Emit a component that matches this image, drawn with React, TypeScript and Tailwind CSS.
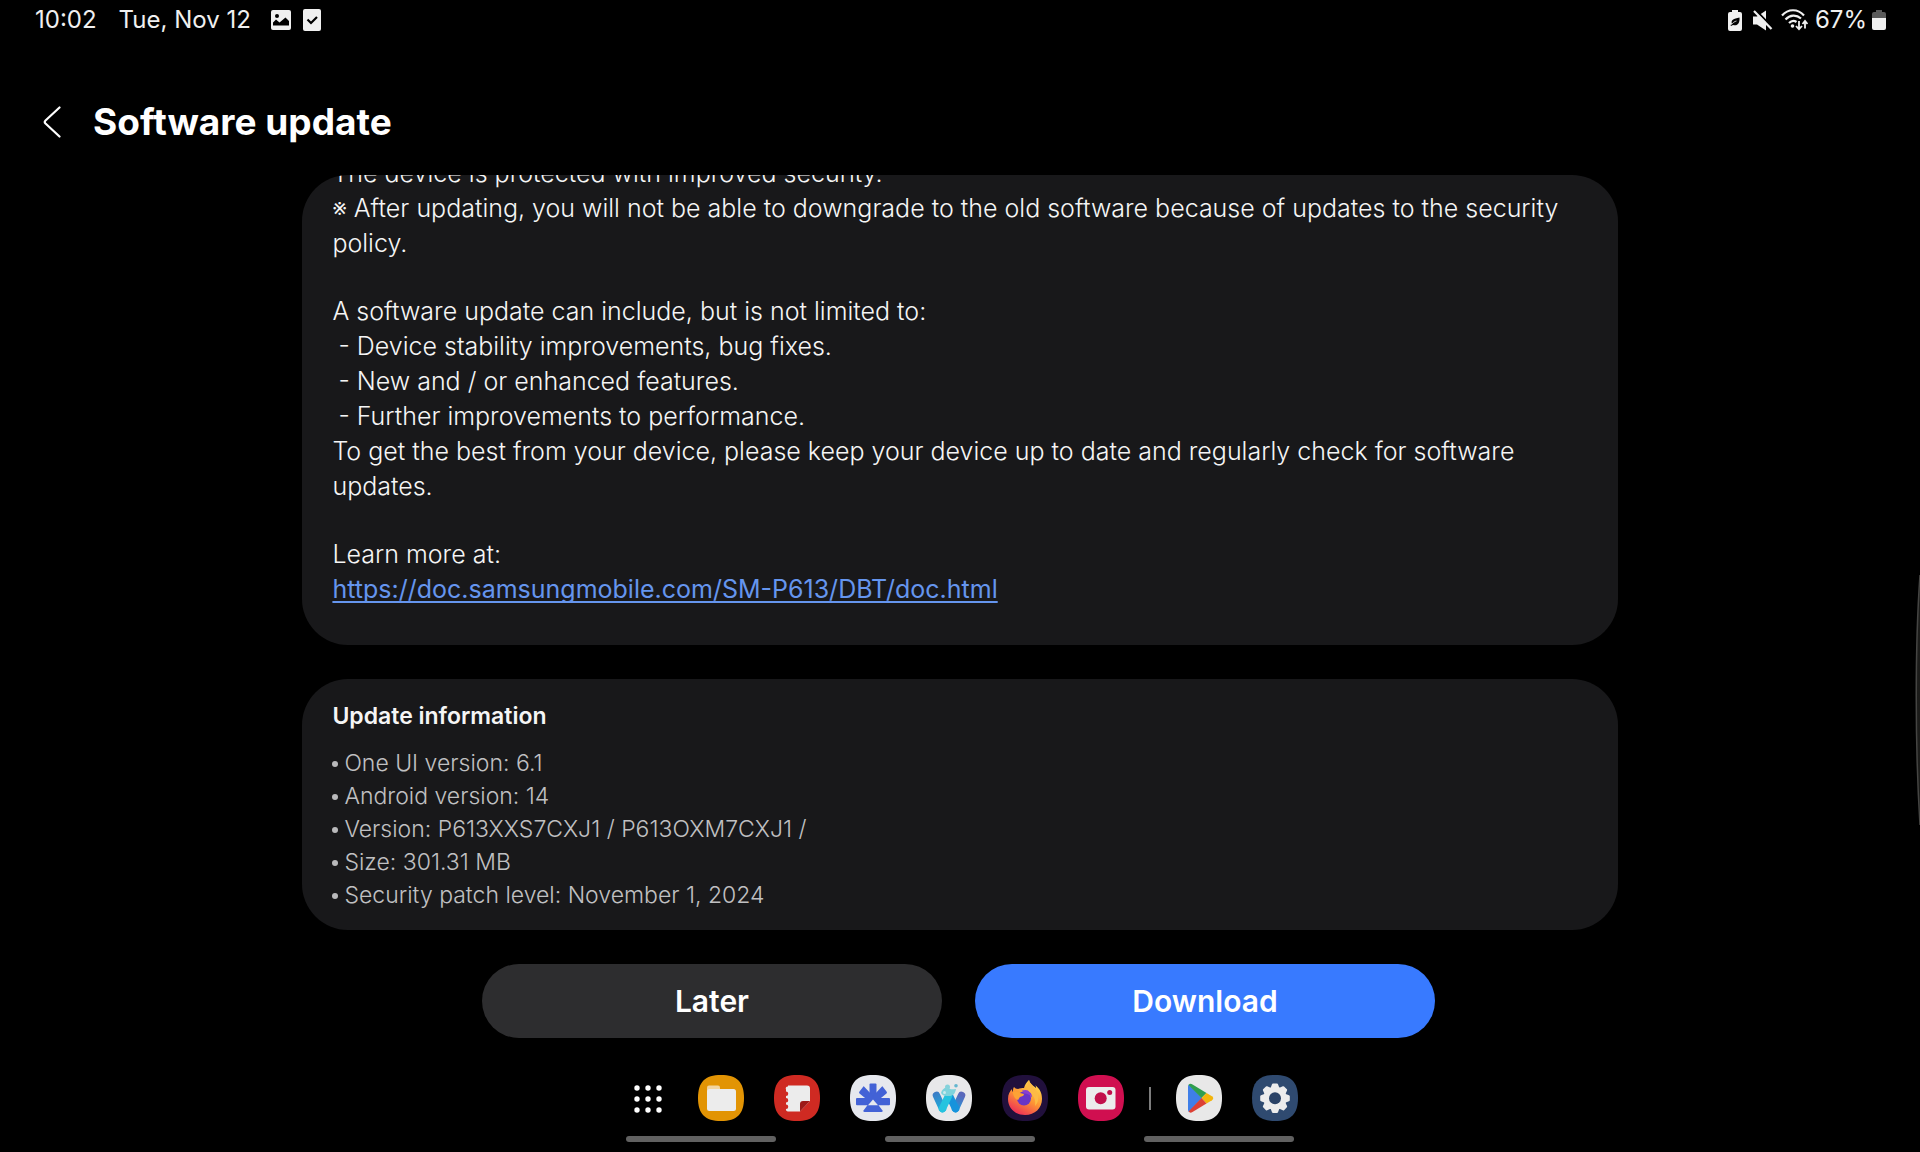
import { ReactNode } from 'react';

const details = [
    'One UI version: 6.1',
    'Android version: 14',
    'Version: P613XXS7CXJ1 / P613OXM7CXJ1 /',
    'Size: 301.31 MB',
    'Security patch level: November 1, 2024',
];

function StatusBar() {
    return (
        <div className="h-10 flex items-center justify-between pl-[35px] pr-[34px] text-2xl text-[#f0f0f0]">
            <div className="flex items-center">
                <span>10:02</span>
                <span className="ml-[22px]">Tue, Nov 12</span>
                <svg className="ml-5" width="20" height="20" viewBox="0 0 20 20">
                    <rect width="20" height="20" rx="2" fill="#f0f0f0" />
                    <circle cx="6" cy="6" r="2" fill="#000" />
                    <path d="M2 15.500v-3l3-3 3.500 3 6-5 3.500 3.500v4.500z" fill="#000" />
                </svg>
                <svg className="ml-3" width="18" height="22" viewBox="0 0 18 22">
                    <rect width="18" height="22" rx="2" fill="#f0f0f0" />
                    <path d="M4.500 10.500l3.500 3.500 6-6" fill="none" stroke="#000" strokeWidth="2.200" />
                </svg>
            </div>
            <div className="flex items-center">
                <svg width="14" height="21" viewBox="0 0 14 21">
                    <path d="M4 0h6v2h2a2 2 0 0 1 2 2v15a2 2 0 0 1-2 2H2a2 2 0 0 1-2-2V4a2 2 0 0 1 2-2h2z" fill="#f0f0f0" />
                    <path d="M11.500 7.500C12 13 9.500 16.500 5 15l-2 1-.5-1 1.500-1C2.500 10 5.500 8.500 11.500 7.500z" fill="#000" />
                    <path d="M3.500 14.500C5 12.500 6.500 11.500 8.500 11" fill="none" stroke="#f0f0f0" strokeWidth="0.800" />
                </svg>
                <svg className="ml-[11px]" width="20" height="21" viewBox="0 0 20 21">
                    <path d="M0 6.500h4l9-6v20l-9-6H0z" fill="#f0f0f0" />
                    <path d="M3.500 1l17 17.500" stroke="#000" strokeWidth="2" />
                    <path d="M1 1l17.500 18" stroke="#f0f0f0" strokeWidth="2.200" />
                </svg>
                <svg className="ml-2" width="27" height="22" viewBox="0 0 27 22">
                    <g fill="none" stroke="#f0f0f0" strokeWidth="2.200">
                        <path d="M1 6.500C7 -0.500 17 -0.500 23 6.500" />
                        <path d="M4.500 10.500C9 5.500 15.500 5.500 20 9.500" />
                        <path d="M8 14C10.500 11.500 13.500 11.500 15.500 13" />
                    </g>
                    <circle cx="11.500" cy="17" r="1.800" fill="#f0f0f0" />
                    <g fill="none" stroke="#f0f0f0" strokeWidth="1.800">
                        <path d="M18 12v8M15 17l3 3.200 3-3.200" />
                        <path d="M24 19.500v-7M21.500 15l2.500-3 2.500 3" />
                    </g>
                </svg>
                <span className="ml-[7px]">67%</span>
                <svg className="ml-[5px]" width="14" height="20" viewBox="0 0 14 20">
                    <path d="M4 0h6v2h2a2 2 0 0 1 2 2v4H0V4a2 2 0 0 1 2-2h2z" fill="#5a5a5a" />
                    <path d="M0 8h14v10a2 2 0 0 1-2 2H2a2 2 0 0 1-2-2z" fill="#f0f0f0" />
                </svg>
            </div>
        </div>
    );
}

function AppIcon({ label, fill, children }: { label: string; fill: string; children: ReactNode }) {
    return (
        <button type="button" aria-label={label}>
            <svg width="46" height="46" viewBox="0 0 46 46">
                <path d="M23 0C39 0 46 7 46 23S39 46 23 46 0 39 0 23 7 0 23 0z" fill={fill} />
                {children}
            </svg>
        </button>
    );
}

function Dock() {
    return (
        <nav aria-label="Taskbar" className="flex justify-center items-center">
            <div className="flex gap-[30px]">
                <button type="button" aria-label="All apps">
                    <svg width="46" height="46" viewBox="0 0 46 46" fill="#fff">
                        {[12, 23, 34].map((y) =>
                            [15, 26, 37].map((x) => <circle key={`${x}-${y}`} cx={x} cy={y + 1} r="2.700" />)
                        )}
                    </svg>
                </button>
                <AppIcon label="My Files" fill="#e29404">
                    <path d="M9 17v-4.500a2 2 0 0 1 2-2h9a2 2 0 0 1 2 2V17z" fill="#f2d5a0" />
                    <rect x="9" y="14" width="29" height="22" rx="2.500" fill="#ececec" />
                </AppIcon>
                <AppIcon label="Notes" fill="#cf2a22">
                    <path d="M14 10.500h19a3 3 0 0 1 3 3V26l-10 10.500H14a2 2 0 0 1-2-2.500 2.200 2.200 0 0 0 0-4.500v-2a2.200 2.200 0 0 0 0-4.500v-2a2.200 2.200 0 0 0 0-4.500v-2a2 2 0 0 1 2-3z" fill="#ececec" />
                    <path d="M26 36.500V29a3 3 0 0 1 3-3h7z" fill="#9d1a18" />
                </AppIcon>
                <AppIcon label="Good Lock" fill="#e6e8ee">
                    <g fill="#4362d6">
                        <path d="M20.500 8.500h5q1 0 1 1V24h-7V9.500q0-1 1-1z" />
                        <path d="M14 11.500l9 9.500-3 6-10.500-8.500q-1-1 0-2l3.500-4.500q.5-1 1-.5z" />
                        <path d="M32 11.500L23 21l3 6 10.500-8.500q1-1 0-2L33 12q-.5-1-1-.5z" />
                        <rect x="6" y="23" width="34" height="7.300" rx="1" />
                        <path d="M18 29.500h10l4.500 6q.5 1.500-1 1.500h-17q-1.500 0-1-1.500z" />
                    </g>
                    <path d="M23 24.500l5 5.800H18z" fill="#e6e8ee" />
                </AppIcon>
                <AppIcon label="Waterfox" fill="#e8e8ea">
                    <defs>
                        <linearGradient id="wave" gradientUnits="userSpaceOnUse" x1="8" y1="17" x2="17" y2="36">
                            <stop offset="0" stopColor="#3f78c4" />
                            <stop offset="1" stopColor="#17b4df" />
                        </linearGradient>
                        <linearGradient id="waveEnd" gradientUnits="userSpaceOnUse" x1="38" y1="17" x2="29" y2="36">
                            <stop offset="0.200" stopColor="#5a68bb" />
                            <stop offset="1" stopColor="#189fe0" />
                        </linearGradient>
                    </defs>
                    <g fill="none" strokeWidth="7.500" strokeLinecap="round" strokeLinejoin="round">
                        <path d="M10.500 20.500l6 13" stroke="url(#wave)" />
                        <path d="M35.500 20.500l-6 13" stroke="url(#waveEnd)" />
                        <path d="M24 22l5.500 11.500" stroke="#1793dc" />
                        <path d="M16.500 33.500L22.500 21" stroke="#25c3df" />
                    </g>
                    <path d="M15 18c1-4 4-6 7-5 3 2 5 1 8 1-1 5-3 7-7 7s-6 0-8-3z" fill="#7fd3dc" />
                    <circle cx="21.500" cy="12" r="2.500" fill="#86d2db" />
                    <circle cx="30" cy="10.800" r="1.800" fill="#64b6cf" />
                    <circle cx="18.500" cy="17.500" r="1.500" fill="#c9eaee" />
                </AppIcon>
                <AppIcon label="Firefox" fill="#21103c">
                    <defs>
                        <linearGradient id="flame" x1="0.800" y1="0.100" x2="0.300" y2="1">
                            <stop offset="0" stopColor="#ffd84a" />
                            <stop offset="0.500" stopColor="#fd9434" />
                            <stop offset="1" stopColor="#ee2d58" />
                        </linearGradient>
                    </defs>
                    <path d="M12 12c1 1 2 2 4 2 2-1 4-1 6-1 1-4 3-6 5-8 1 4 5 6 7 8 0-1 0-2-1-3 5 4 7 8 7 14 0 9-7 16-17 16S6 33 6 24c0-5 2-8 4-10 0 1 0 2 1 3 0-2 0-4 1-5z" fill="url(#flame)" />
                    <circle cx="22" cy="23.500" r="7" fill="#6a35c6" />
                    <path d="M20 15.500c6-2 10 1 10 7-2-3-5-4-8-4z" fill="#8a3fd0" />
                    <path d="M11 17c3-1 6 0 7 1l4 1c0 2-2 2-4 3-1 1-1 2-2 3-3-1-5-4-5-8z" fill="#fda235" />
                    <path d="M27 5c1 5 7 8 9 14 1 5 0 9-3 12 1-6-1-9-4-13-4-2-5-7-2-13z" fill="#fdbb45" />
                </AppIcon>
                <AppIcon label="Camera" fill="#d00f50">
                    <rect x="8" y="12" width="29.500" height="22.500" rx="3" fill="#ececec" />
                    <circle cx="22.700" cy="23.300" r="6" fill="#c20f4b" />
                    <circle cx="31.700" cy="17.500" r="2.500" fill="#c20f4b" />
                </AppIcon>
            </div>
            <div className="w-[2px] h-[23px] mx-[25px] bg-[#7d7d7d]" />
            <div className="flex gap-[30px]">
                <AppIcon label="Play Store" fill="#e8e8e8">
                    <path d="M13 9.500L26 23 13 37q-1-1-1-2.500v-23q0-1.500 1-2z" fill="#3f7fe8" />
                    <path d="M12.500 10q1.500-2 4-.5L30.500 18 25.500 23z" fill="#2f9e4f" />
                    <path d="M30.500 18l5.500 3.200q2.500 2 0 4L30.500 28.500 25.500 23z" fill="#f3b50c" />
                    <path d="M12.500 36.500q1.500 2 4 .5l14-8.500L25.500 23z" fill="#dc4034" />
                </AppIcon>
                <AppIcon label="Settings" fill="#2f4a70">
                    <g fill="#ececec" transform="translate(23 23.300)">
                        {[0, 45, 90, 135, 180, 225, 270, 315].map((a) => (
                            <path key={a} d="M-4.500-10l1.500-4q.3-.8 1-.8h4q.7 0 1 .8l1.500 4z" transform={`rotate(${a})`} />
                        ))}
                        <circle r="11.500" />
                    </g>
                    <circle cx="23" cy="23.300" r="6" fill="#2a4266" />
                </AppIcon>
            </div>
        </nav>
    );
}

export default function App() {
    return (
        <div className="relative min-h-screen bg-black text-[#f5f5f5] font-['Inter','Noto_Sans_CJK_KR',sans-serif] flex flex-col overflow-hidden">
            <StatusBar />

            <header className="h-[135px] pt-7 pl-[35px] flex items-center">
                <button type="button" aria-label="Back" className="w-[34px] h-10 flex items-center justify-center">
                    <svg width="18" height="32" viewBox="0 0 18 32" fill="none" stroke="#fff" strokeWidth="2.200" strokeLinecap="round" strokeLinejoin="round">
                        <path d="M16.500 1.500L2.500 14.500q-1.500 1.500 0 3L16.500 30.500" />
                    </svg>
                </button>
                <h1 className="ml-6 text-[37px] font-bold text-white">Software update</h1>
            </header>

            <main className="w-[68.5%] mx-auto rounded-t-[46px] overflow-hidden">
                <section className="-mt-[19px] px-[30px] pb-[38px] rounded-b-[46px] bg-[#18181a] text-[25px] leading-[35px] font-light">
                    <p>The device is protected with improved security.</p>
                    <p>※ After updating, you will not be able to downgrade to the old software because of updates to the security policy.</p>
                    <p className="mt-[33px]">A software update can include, but is not limited to:</p>
                    <ul className="pl-[6px]">
                        <li>- Device stability improvements, bug fixes.</li>
                        <li>- New and / or enhanced features.</li>
                        <li>- Further improvements to performance.</li>
                    </ul>
                    <p>To get the best from your device, please keep your device up to date and regularly check for software updates.</p>
                    <p className="mt-[33px]">Learn more at:</p>
                    <a
                        href="https://doc.samsungmobile.com/SM-P613/DBT/doc.html"
                        className="block w-fit font-normal text-[#6595ee] underline decoration-2 underline-offset-[3px] [text-decoration-skip-ink:none]"
                    >
                        https://doc.samsungmobile.com/SM-P613/DBT/doc.html
                    </a>
                </section>

                <section className="mt-[34px] px-[30px] pt-[21px] pb-[18px] rounded-[46px] bg-[#18181a] text-[23px] leading-[33px]">
                    <h2 className="font-semibold">Update information</h2>
                    <ul className="mt-[14px] text-[#c0c0c2] font-light">
                        {details.map((line) => (
                            <li key={line} className="flex items-center gap-[6px]">
                                <span className="w-[6px] h-[6px] rounded-full bg-[#b9b9bb]" />
                                {line}
                            </li>
                        ))}
                    </ul>
                </section>
            </main>

            <div className="mt-[34px] pr-[3px] flex justify-center gap-[33px] text-[30px] font-semibold text-white">
                <button type="button" className="w-[24%] h-[74px] rounded-full bg-[#2d2d2f]">Later</button>
                <button type="button" className="w-[24%] h-[74px] rounded-full bg-[#387aff]">Download</button>
            </div>

            <footer className="mt-auto pt-9 pb-[10px]">
                <Dock />
                <div className="mt-[15px] flex justify-center gap-[109px]">
                    <div className="w-[150px] h-[6px] rounded-full bg-[#616161]" />
                    <div className="w-[150px] h-[6px] rounded-full bg-[#616161]" />
                    <div className="w-[150px] h-[6px] rounded-full bg-[#616161]" />
                </div>
            </footer>

            {/* edge panel handle */}
            <svg className="absolute right-0 top-[575px]" width="5" height="250" viewBox="0 0 5 250">
                <path d="M5 0C0 70 0 170 5 250z" fill="#1c1c1a" />
                <path d="M5 0C0 70 0 170 5 250" fill="none" stroke="#454543" strokeWidth="1.500" />
            </svg>
        </div>
    );
}
